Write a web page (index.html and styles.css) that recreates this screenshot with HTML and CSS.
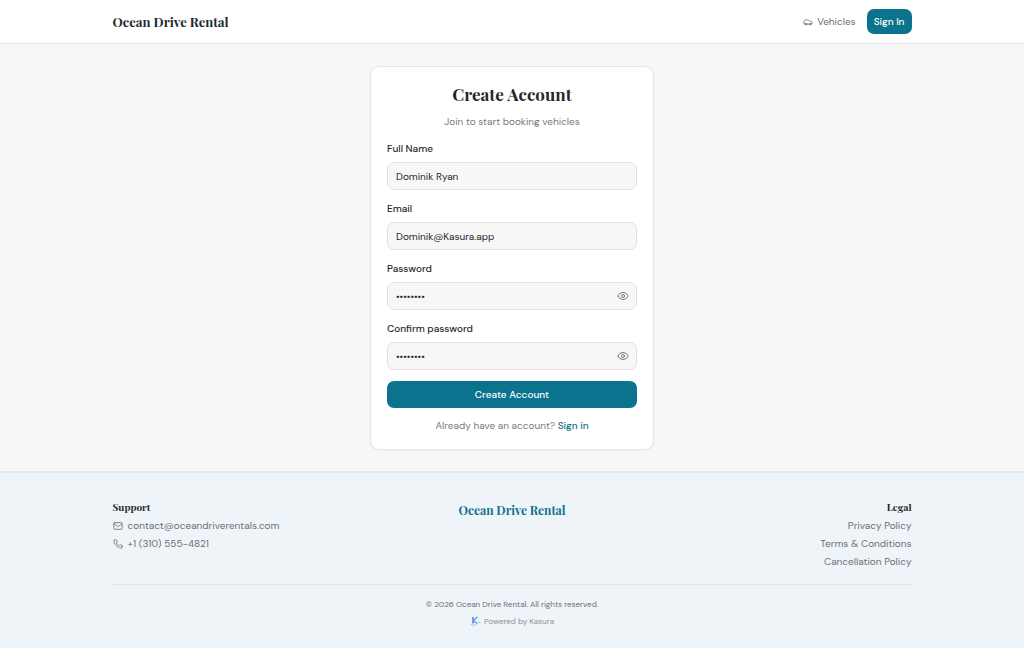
FILE: index.html
```html
<!DOCTYPE html>
<html lang="en">

<head>
    <meta charset="UTF-8">
    <meta name="viewport" content="width=device-width, initial-scale=1.0">
    <title>Create Account - Ocean Drive Rental</title>
    <link rel="stylesheet" href="styles.css">
</head>

<body>

    <header class="site-header">
        <div class="container header-inner">
            <a href="#" class="brand">Ocean Drive Rental</a>
            <nav class="main-nav">
                <a href="#" class="nav-link">
                    <svg class="icon" viewBox="0 0 24 24" aria-hidden="true">
                        <path d="M19 17h2c.6 0 1-.4 1-1v-3c0-.9-.7-1.7-1.5-1.9C18.7 10.6 16 10 16 10s-1.3-1.4-2.2-2.3c-.5-.4-1.1-.7-1.8-.7H5c-.6 0-1.1.4-1.4.9l-1.4 2.9A3.7 3.7 0 0 0 2 12v4c0 .6.4 1 1 1h2" />
                        <circle cx="7" cy="17" r="2" />
                        <path d="M9 17h6" />
                        <circle cx="17" cy="17" r="2" />
                    </svg>
                    Vehicles
                </a>
                <a href="#" class="sign-in-btn">Sign In</a>
            </nav>
        </div>
    </header>

    <main class="page">
        <section class="card">
            <h1>Create Account</h1>
            <p class="subtitle">Join to start booking vehicles</p>

            <form action="#" method="POST">
                <div class="form-group">
                    <label for="fullName">Full Name</label>
                    <input type="text" id="fullName" name="fullName" value="Dominik Ryan" required>
                </div>
                <div class="form-group">
                    <label for="email">Email</label>
                    <input type="email" id="email" name="email" value="Dominik@Kasura.app" required>
                </div>
                <div class="form-group">
                    <label for="password">Password</label>
                    <div class="password-field">
                        <input type="password" id="password" name="password" value="password" required>
                        <button type="button" class="toggle" aria-label="Show password">
                            <svg class="icon" viewBox="0 0 24 24" aria-hidden="true">
                                <path d="M2 12.3a1 1 0 0 1 0-.7 10.8 10.8 0 0 1 20 0 1 1 0 0 1 0 .7 10.8 10.8 0 0 1-20 0" />
                                <circle cx="12" cy="12" r="3" />
                            </svg>
                        </button>
                    </div>
                </div>
                <div class="form-group">
                    <label for="confirmPassword">Confirm password</label>
                    <div class="password-field">
                        <input type="password" id="confirmPassword" name="confirmPassword" value="password" required>
                        <button type="button" class="toggle" aria-label="Show confirmed password">
                            <svg class="icon" viewBox="0 0 24 24" aria-hidden="true">
                                <path d="M2 12.3a1 1 0 0 1 0-.7 10.8 10.8 0 0 1 20 0 1 1 0 0 1 0 .7 10.8 10.8 0 0 1-20 0" />
                                <circle cx="12" cy="12" r="3" />
                            </svg>
                        </button>
                    </div>
                </div>
                <button type="submit" class="submit-btn">Create Account</button>
            </form>

            <p class="switch">Already have an account? <a href="#">Sign in</a></p>
        </section>
    </main>

    <footer class="site-footer">
        <div class="container">
            <div class="footer-columns">
                <div class="footer-col">
                    <h2>Support</h2>
                    <a href="mailto:contact@oceandriverentals.com">
                        <svg class="icon" viewBox="0 0 24 24" aria-hidden="true">
                            <rect x="2" y="4" width="20" height="16" rx="2" />
                            <path d="m22 7-9 5.7a2 2 0 0 1-2 0L2 7" />
                        </svg>
                        contact@oceandriverentals.com
                    </a>
                    <a href="tel:+13105554821">
                        <svg class="icon" viewBox="0 0 24 24" aria-hidden="true">
                            <path d="M22 16.9v3a2 2 0 0 1-2.2 2 19.8 19.8 0 0 1-8.6-3.1 19.5 19.5 0 0 1-6-6A19.8 19.8 0 0 1 2.1 4.2 2 2 0 0 1 4.1 2h3a2 2 0 0 1 2 1.7c.1 1 .4 1.9.7 2.8a2 2 0 0 1-.5 2.1L8.1 9.9a16 16 0 0 0 6 6l1.3-1.3a2 2 0 0 1 2.1-.4c.9.3 1.8.5 2.8.7a2 2 0 0 1 1.7 2z" />
                        </svg>
                        +1 (310) 555-4821
                    </a>
                </div>
                <a href="#" class="footer-brand">Ocean Drive Rental</a>
                <div class="footer-col legal">
                    <h2>Legal</h2>
                    <a href="#">Privacy Policy</a>
                    <a href="#">Terms &amp; Conditions</a>
                    <a href="#">Cancellation Policy</a>
                </div>
            </div>
            <div class="footer-bottom">
                <p>© 2026 Ocean Drive Rental. All rights reserved.</p>
                <a href="#" class="powered">
                    <svg class="kasura-logo" viewBox="0 0 22 20" aria-hidden="true">
                        <path class="k-stem" d="M6 2v13" />
                        <path class="k-arm" d="M15 2 7 9l7 6" />
                        <path class="k-wave" d="M1 16c4 4 9 3 12 0s5-4 8-3" />
                    </svg>
                    Powered by Kasura
                </a>
            </div>
        </div>
    </footer>

</body>

</html>
```

FILE: styles.css
```css
* {
    box-sizing: border-box;
}

body {
    font-family: "DM Sans", Inter, sans-serif;
    font-size: 10px;
    line-height: 16px;
    color: #22282d;
    background-color: #f8f7f5;
    margin: 0;
    min-height: 100vh;
    display: flex;
    flex-direction: column;
}

h1,
h2,
p {
    margin: 0;
}

a {
    color: inherit;
    text-decoration: none;
}

.container {
    width: 100%;
    max-width: 831px;
    margin: 0 auto;
    padding: 0 16px;
}

.icon {
    width: 10px;
    height: 10px;
    fill: none;
    stroke: currentColor;
    stroke-width: 2;
    stroke-linecap: round;
    stroke-linejoin: round;
    flex-shrink: 0;
}

/* Header */
.site-header {
    background-color: #fff;
    border-bottom: 1px solid #e6e4e1;
    padding: 9px 0;
}

.header-inner,
.main-nav,
.nav-link {
    display: flex;
    align-items: center;
}

.header-inner {
    justify-content: space-between;
}

.brand,
.footer-brand,
h1,
h2 {
    font-family: "Playfair Display", "Liberation Serif", serif;
    font-weight: bold;
}

.brand {
    font-size: 13px;
}

.main-nav {
    gap: 11px;
}

.nav-link {
    gap: 4px;
    color: #687078;
}

.sign-in-btn {
    background-color: #0b738d;
    color: #fff;
    font-weight: 500;
    line-height: 25px;
    padding: 0 7px;
    border-radius: 7px;
}

/* Sign up card */
.page {
    padding: 22px 16px 21px;
}

.card {
    width: 100%;
    max-width: 284px;
    margin: 0 auto;
    padding: 16px;
    background-color: #fff;
    border: 1px solid #e8e6e3;
    border-radius: 9px;
    box-shadow: 0 1px 2px rgba(0, 0, 0, 0.04);
}

h1 {
    font-size: 17px;
    line-height: 22px;
    text-align: center;
}

.subtitle {
    margin: 9px 0 12px;
    text-align: center;
    color: #747b82;
}

.form-group {
    margin-bottom: 12px;
}

.form-group:last-of-type {
    margin-bottom: 11px;
}

.form-group label {
    display: block;
    margin-bottom: 6px;
    line-height: 14px;
    font-weight: 500;
}

.form-group input {
    display: block;
    width: 100%;
    height: 28px;
    padding: 0 8px;
    font: inherit;
    color: inherit;
    background-color: #f8f7f6;
    border: 1px solid #e4e2df;
    border-radius: 7px;
}

.password-field {
    position: relative;
}

.form-group .password-field input {
    padding-right: 28px;
}

.toggle {
    position: absolute;
    top: 0;
    right: 0;
    width: 28px;
    height: 28px;
    padding: 0;
    border: none;
    background: none;
    color: #747b82;
    display: flex;
    align-items: center;
    justify-content: center;
    cursor: pointer;
}

.toggle .icon {
    width: 12px;
    height: 12px;
}

.submit-btn {
    display: block;
    width: 100%;
    height: 27px;
    padding: 0;
    font: inherit;
    font-weight: 500;
    color: #fff;
    background-color: #0b738d;
    border: none;
    border-radius: 7px;
    cursor: pointer;
}

.switch {
    margin-top: 10px;
    text-align: center;
    line-height: 15px;
    color: #747b82;
}

.switch a {
    color: #0b738d;
    font-weight: 500;
}

/* Footer */
.site-footer {
    flex: 1;
    padding: 26px 0 16px;
    background-color: #eff4f8;
    border-top: 2px solid #dfe9ee;
    color: #687078;
}

.footer-columns {
    display: grid;
    grid-template-columns: 1fr auto 1fr;
    padding-bottom: 13px;
}

.footer-col {
    display: flex;
    flex-direction: column;
    align-items: flex-start;
}

.footer-col.legal {
    align-items: flex-end;
}

.footer-col h2 {
    margin-bottom: 2px;
    font-size: 10px;
    color: #22282d;
}

.footer-col a {
    display: flex;
    align-items: center;
    gap: 5px;
    line-height: 18px;
}

.footer-brand {
    font-size: 12px;
    line-height: 22px;
    color: #0b738d;
}

.footer-bottom {
    display: flex;
    flex-direction: column;
    align-items: center;
    gap: 3px;
    padding-top: 12px;
    border-top: 1px solid #e0e5e9;
    font-size: 8px;
    line-height: 14px;
}

.powered {
    display: flex;
    align-items: center;
    gap: 3px;
    font-size: 8px;
    color: #8a9198;
}

.kasura-logo {
    width: 11px;
    height: 10px;
    fill: none;
    stroke-width: 3;
}

.k-stem {
    stroke: #4f7fe0;
}

.k-arm {
    stroke: #6c9cf0;
}

.k-wave {
    stroke: #7cc4e8;
    stroke-width: 2;
}
```
